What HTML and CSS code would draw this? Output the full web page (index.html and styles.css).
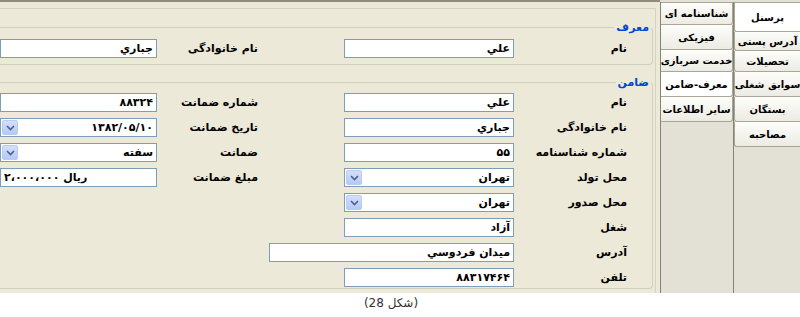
FILE: index.html
```html
<!DOCTYPE html>
<html dir="rtl" lang="fa">
<head>
    <meta charset="utf-8">
    <title>معرف و ضامن</title>
    <link rel="stylesheet" href="styles.css">
</head>
<body>
    <div class="window">
        <div class="tabs">
            <div class="tab-col col-a">
                <div class="tab active">پرسنل</div>
                <div class="tab">آدرس پستی</div>
                <div class="tab">تحصیلات</div>
                <div class="tab">سوابق شغلی</div>
                <div class="tab">بستگان</div>
                <div class="tab">مصاحبه</div>
            </div>
            <div class="tab-col col-b">
                <div class="tab">شناسنامه ای</div>
                <div class="tab">فیزیکی</div>
                <div class="tab">خدمت سربازی</div>
                <div class="tab active">معرف-ضامن</div>
                <div class="tab">سایر اطلاعات</div>
            </div>
        </div>

        <div class="page">
            <div class="frame">
                <fieldset class="group">
                    <legend>معرف</legend>
                    <div class="cols">
                        <div class="col col-main">
                            <div class="row"><span class="label">نام</span><div class="field">علي</div></div>
                        </div>
                        <div class="col col-side">
                            <div class="row"><span class="label">نام خانوادگی</span><div class="field">جباري</div></div>
                        </div>
                    </div>
                </fieldset>

                <fieldset class="group group-guarantor">
                    <legend>ضامن</legend>
                    <div class="cols">
                        <div class="col col-main">
                            <div class="row"><span class="label">نام</span><div class="field">علي</div></div>
                            <div class="row"><span class="label">نام خانوادگی</span><div class="field">جباري</div></div>
                            <div class="row"><span class="label">شماره شناسنامه</span><div class="field">۵۵</div></div>
                            <div class="row"><span class="label">محل تولد</span><div class="field select">تهران<span class="drop"><svg width="9" height="6" viewBox="0 0 9 6"><polyline points="1,1 4.5,4.5 8,1" fill="none" stroke="#4d6185" stroke-width="1.6"/></svg></span></div></div>
                            <div class="row"><span class="label">محل صدور</span><div class="field select">تهران<span class="drop"><svg width="9" height="6" viewBox="0 0 9 6"><polyline points="1,1 4.5,4.5 8,1" fill="none" stroke="#4d6185" stroke-width="1.6"/></svg></span></div></div>
                            <div class="row"><span class="label">شغل</span><div class="field">آزاد</div></div>
                            <div class="row"><span class="label">آدرس</span><div class="field wide">میدان فردوسي</div></div>
                            <div class="row"><span class="label">تلفن</span><div class="field">۸۸۳۱۷۴۶۴</div></div>
                        </div>
                        <div class="col col-side">
                            <div class="row"><span class="label">شماره ضمانت</span><div class="field">۸۸۳۲۴</div></div>
                            <div class="row"><span class="label">تاریخ ضمانت</span><div class="field select">۱۳۸۲/۰۵/۱۰<span class="drop"><svg width="9" height="6" viewBox="0 0 9 6"><polyline points="1,1 4.5,4.5 8,1" fill="none" stroke="#4d6185" stroke-width="1.6"/></svg></span></div></div>
                            <div class="row"><span class="label">ضمانت</span><div class="field select">سفته<span class="drop"><svg width="9" height="6" viewBox="0 0 9 6"><polyline points="1,1 4.5,4.5 8,1" fill="none" stroke="#4d6185" stroke-width="1.6"/></svg></span></div></div>
                            <div class="row"><span class="label">مبلغ ضمانت</span><div class="field amount">ریال ۲،۰۰۰،۰۰۰</div></div>
                        </div>
                    </div>
                </fieldset>
            </div>
        </div>
    </div>
    <p class="caption">(شکل 28)</p>
</body>
</html>
```

FILE: styles.css
```css
* {
    box-sizing: border-box;
}
body {
    margin: 0;
    background: #fff;
    font-family: "DejaVu Sans", sans-serif;
    font-size: 11px;
    color: #000;
}
.window {
    display: flex;
    width: 800px;
    height: 293px;
    background: #ece9d8;
}

/* tab columns on the right */
.tabs {
    display: flex;
    flex: none;
    width: 140px;
    padding-top: 2px;
    background: #e3e0d5;
}
.tab-col {
    flex: none;
    border-left: 1px solid #858373;
}
.col-a {
    width: 67px;
}
.col-b {
    width: 73px;
}
.tab {
    display: flex;
    align-items: center;
    justify-content: center;
    height: 25px;
    border: 1px solid #a9a697;
    border-top: 0;
    border-right: 0;
    border-radius: 0 0 0 3px;
    background: linear-gradient(#fdfdfb, #ecebe3);
    font-size: 10px;
    font-weight: bold;
    white-space: nowrap;
}
.tab:first-child {
    border-top: 1px solid #a9a697;
}
.col-b .tab {
    border-left: 0;
    border-right: 1px solid #a9a697;
    border-radius: 0 0 3px 0;
}
.tab.active {
    background: #fff;
}
.col-a .tab:nth-child(1) { height: 30px; }
.col-a .tab:nth-child(2) { height: 19px; }
.col-a .tab:nth-child(3) { height: 21px; }
.col-b .tab:nth-child(1) { height: 23px; }
.col-b .tab:nth-child(3) { height: 22px; }

/* form page */
.page {
    flex: none;
    width: 660px;
    border-top: 2px solid #8f8c7e;
}
.frame {
    height: 285px;
    margin: 6px 4px 0 0;
    border-top: 1px solid #d6d2c2;
    border-right: 1px solid #d6d2c2;
}
.group {
    min-width: 0;
    margin: 12px 2px 0 0;
    padding: 5px 0 6px 0;
    border: 1px solid #d0d0bf;
    border-left: 0;
    border-radius: 0 4px 4px 0;
}
.group legend {
    margin-right: 1px;
    padding: 0 2px;
    color: #0046d5;
    font-weight: bold;
    line-height: 13px;
}
.group-guarantor {
    height: 213px;
    margin-top: 11px;
    padding-top: 4px;
}
.cols {
    display: flex;
    align-items: flex-start;
}
.col {
    flex: none;
}
.col-main {
    width: 308px;
}
.col-side {
    width: 344px;
}
.row {
    display: flex;
    align-items: center;
    height: 19px;
    margin-bottom: 6px;
}
.row:last-child {
    margin-bottom: 0;
}
.label {
    flex: none;
    font-weight: bold;
    white-space: nowrap;
}
.col-main .label {
    width: 138px;
    padding-right: 25px;
}
.col-side .label {
    width: 187px;
    padding-right: 86px;
}
.field {
    display: flex;
    flex: none;
    align-items: center;
    height: 19px;
    padding: 0 3px;
    border: 1px solid #7f9db9;
    background: #fff;
    font-weight: bold;
    white-space: nowrap;
}
.col-main .field {
    width: 170px;
}
.col-side .field {
    width: 157px;
}
.col-main .field.wide {
    width: 245px;
}
.field.amount {
    justify-content: flex-end;
}
.select {
    padding-left: 1px;
}
.drop {
    display: flex;
    align-items: center;
    justify-content: center;
    width: 16px;
    height: 15px;
    margin-right: auto;
    border: 1px solid #bacbf0;
    border-radius: 2px;
    background: linear-gradient(#d3dffc, #b5c9f7);
}
.caption {
    margin: 3px 18px 0 0;
    text-align: center;
    font-size: 12px;
    color: #333;
}
```
